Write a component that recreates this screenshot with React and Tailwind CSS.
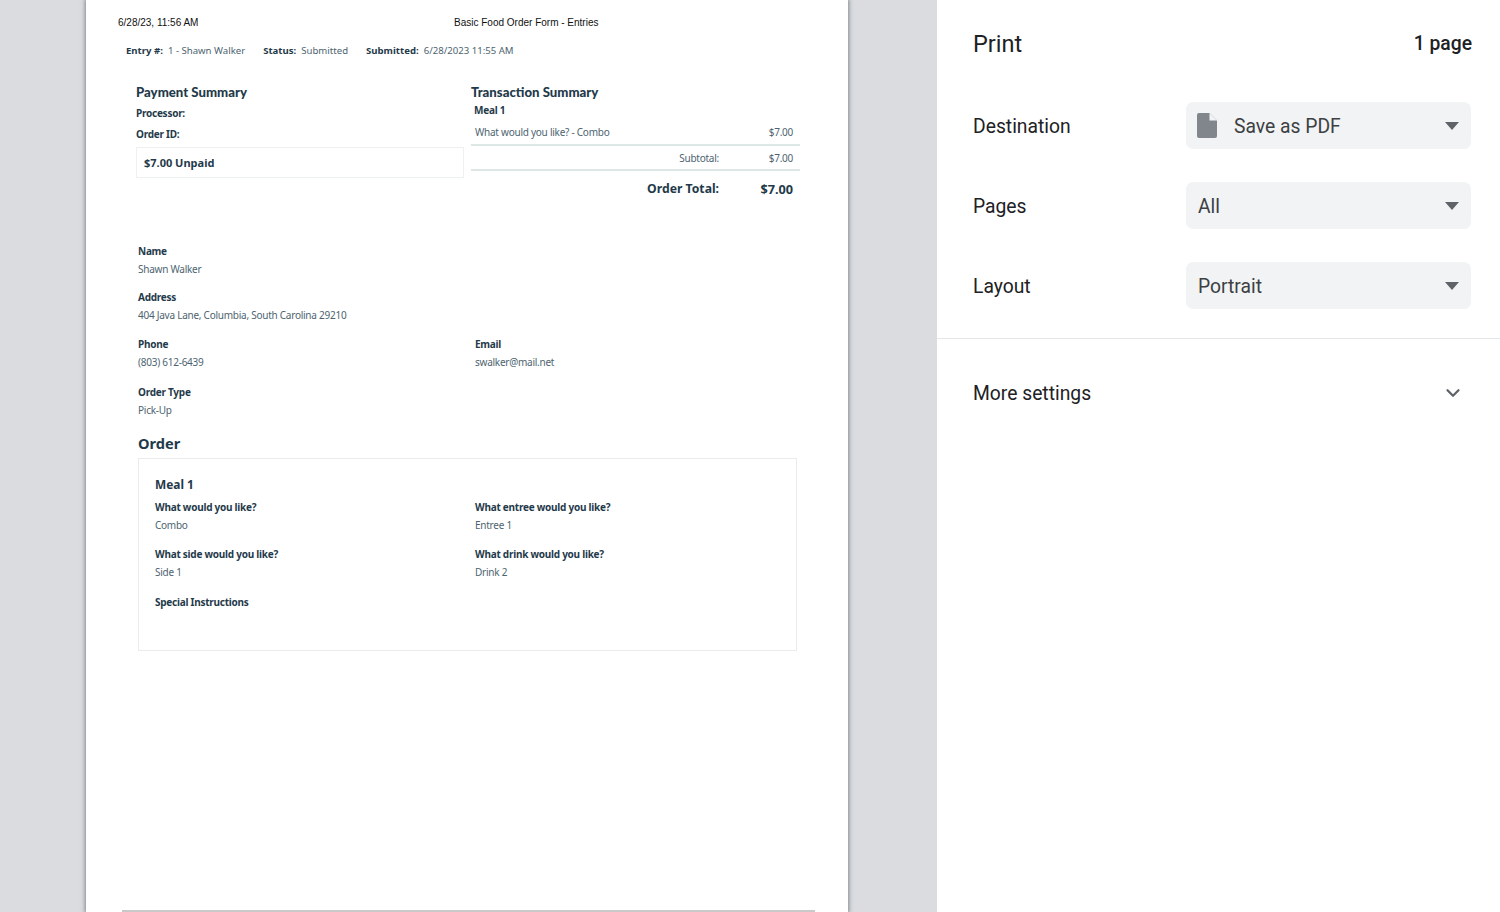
import { ChevronDown } from 'lucide-react';

const Field = ({ label, value, className = 'h-[47.5px]' }) => (
  <div className={className}>
    <div className="h-[18px] leading-[18px] text-[10px] tracking-[-0.25px] font-bold text-[#1f3a4a] font-['Noto_Sans',sans-serif]">{label}</div>
    <div className="h-[18px] leading-[18px] text-[10px] tracking-[-0.25px] text-[#4d6470] font-['Noto_Sans',sans-serif]">{value}</div>
  </div>
);

const Arrow = () => (
  <svg width="14" height="8" viewBox="0 0 14 8" className="shrink-0">
    <path d="M0 0h14L7 8z" fill="#5f6368" />
  </svg>
);

const SelectRow = ({ label, value, icon }) => (
  <div className="flex items-center h-[47px] mb-[33px]">
    <div className="w-[213px] text-[19.3px] leading-[30px] pt-[2px] text-[#202124]">{label}</div>
    <div className={`w-[285px] h-[47px] rounded-[7px] bg-[#f1f3f4] flex items-center pr-[12px] ${icon ? 'pl-[11px]' : 'pl-3'}`}>
      {icon && (
        <svg width="20" height="25" viewBox="0 0 20 25" className="mr-[17px] shrink-0">
          <path d="M2 0h10.5L20 7.5V23a2 2 0 0 1-2 2H2a2 2 0 0 1-2-2V2a2 2 0 0 1 2-2z" fill="#80868b" />
          <path d="M12.5 0v7.5H20z" fill="#f1f3f4" />
        </svg>
      )}
      <span className="flex-1 text-[19.3px] leading-[30px] pt-[2px] text-[#3c4043]">{value}</span>
      <Arrow />
    </div>
  </div>
);

export default function App() {
  return (
    <div className="flex h-[912px] w-[1500px] overflow-hidden bg-[#dadce0] font-['Roboto',sans-serif]">
      <div className="w-[937px] shrink-0 pl-[86px]">
        <div className="w-[762px] h-[912px] bg-white shadow-[0_0_4px_1px_rgba(60,64,67,0.55)] flex flex-col">
          <div className="flex pl-8 pt-[17px] h-[12px] box-content leading-[12px] text-[10px] text-[#111] font-['Liberation_Sans',sans-serif]">
            <span className="w-[336px]">6/28/23, 11:56 AM</span>
            <span>Basic Food Order Form - Entries</span>
          </div>

          <div className="flex mt-[14px] pl-10 h-[16px] leading-[16px] text-[9.6px] text-[#4d6470] font-['Noto_Sans',sans-serif]">
            <span className="font-bold text-[#1f3a4a] mr-[5px]">Entry #:</span>
            <span className="mr-[18px]">1 - Shawn Walker</span>
            <span className="font-bold text-[#1f3a4a] mr-[5px]">Status:</span>
            <span className="mr-[18px]">Submitted</span>
            <span className="font-bold text-[#1f3a4a] mr-[5px]">Submitted:</span>
            <span>6/28/2023 11:55 AM</span>
          </div>

          <div className="flex mt-[24px] pl-[50px]">
            <div className="w-[328px] mr-[7px]">
              <div className="h-[18px] leading-[18px] text-[13.2px] font-black text-[#1f3a4a] font-['Lato',sans-serif]">Payment Summary</div>
              <div className="mt-[2px] h-[21px] leading-[21px] text-[10px] tracking-[-0.25px] font-bold text-[#1f3a4a] font-['Noto_Sans',sans-serif]">Processor:</div>
              <div className="h-[21px] leading-[21px] text-[10px] tracking-[-0.25px] font-bold text-[#1f3a4a] font-['Noto_Sans',sans-serif]">Order ID:</div>
              <div className="mt-[2px] h-[31px] border border-[#eef1f1] pl-[7px] pt-[1px] flex items-center text-[11px] font-bold text-[#1f3a4a] font-['Noto_Sans',sans-serif]">$7.00 Unpaid</div>
            </div>
            <div className="w-[329px]">
              <div className="h-[18px] leading-[18px] text-[13.2px] font-black text-[#1f3a4a] font-['Lato',sans-serif]">Transaction Summary</div>
              <div className="pl-[3px] h-[18px] leading-[18px] text-[10px] tracking-[-0.25px] font-bold text-[#1f3a4a] font-['Noto_Sans',sans-serif]">Meal 1</div>
              <div className="flex justify-between items-center h-[27px] pl-1 pr-[7px] pt-[2px] border-b-2 border-[#dde7e6] text-[10px] tracking-[-0.25px] text-[#4d6470] font-['Noto_Sans',sans-serif]">
                <span>What would you like? - Combo</span>
                <span>$7.00</span>
              </div>
              <div className="flex justify-end items-center h-[25px] pr-[7px] pt-[2px] border-b-2 border-[#dde7e6] text-[10px] tracking-[-0.25px] text-[#4d6470] font-['Noto_Sans',sans-serif]">
                <span>Subtotal:</span>
                <span className="w-[74px] text-right">$7.00</span>
              </div>
              <div className="flex justify-end items-center h-[35px] pr-[7px] pt-[2px] text-[12.2px] font-bold text-[#1f3a4a] font-['Noto_Sans',sans-serif]">
                <span>Order Total:</span>
                <span className="w-[74px] text-right text-[12.7px]">$7.00</span>
              </div>
            </div>
          </div>

          <div className="mt-[36px] pl-[52px]">
            <Field label="Name" value="Shawn Walker" className="h-[46px]" />
            <Field label="Address" value="404 Java Lane, Columbia, South Carolina 29210" className="h-[47px]" />
            <div className="flex">
              <Field label="Phone" value="(803) 612-6439" className="h-[48px] w-[337px]" />
              <Field label="Email" value="swalker@mail.net" className="h-[48px]" />
            </div>
            <Field label="Order Type" value="Pick-Up" className="h-[47.5px]" />
            <div className="h-[24px] leading-[24px] text-[14.6px] font-bold text-[#1f3a4a] font-['Noto_Sans',sans-serif]">Order</div>

            <div className="mt-[3px] w-[659px] h-[193px] border border-[#e8eceb] pl-4 pt-[15px]">
              <div className="h-[20px] leading-[20px] text-[11.9px] font-bold text-[#1f3a4a] font-['Noto_Sans',sans-serif]">Meal 1</div>
              <div className="mt-[4px] grid grid-cols-[320px_1fr]">
                <Field label="What would you like?" value="Combo" className="h-[47px]" />
                <Field label="What entree would you like?" value="Entree 1" className="h-[47px]" />
                <Field label="What side would you like?" value="Side 1" className="h-[48px]" />
                <Field label="What drink would you like?" value="Drink 2" className="h-[48px]" />
                <Field label="Special Instructions" value="" />
              </div>
            </div>
          </div>

          <div className="mt-auto ml-9 w-[693px] h-[2px] bg-[#c9c9c9]" />
        </div>
      </div>

      <div className="flex-1 bg-white">
        <div className="pl-9 pr-[28px]">
          <div className="flex justify-between items-center h-[30px] mt-[28px] mb-[44px]">
            <span className="text-[23.5px] leading-[30px] pt-[2px] text-[#202124]">Print</span>
            <span className="text-[19.3px] leading-[30px] pt-[2px] font-medium text-[#202124]">1 page</span>
          </div>
          <SelectRow label="Destination" value="Save as PDF" icon />
          <SelectRow label="Pages" value="All" />
          <SelectRow label="Layout" value="Portrait" />
        </div>
        <div className="-mt-[4px] border-t border-[#e4e6e8]" />
        <div className="flex items-center justify-between h-[108px] pl-9 pr-[36px] text-[19.3px] leading-[30px] text-[#202124]">
          <span className="pt-[1px]">More settings</span>
          <ChevronDown size={22} strokeWidth={2.5} className="text-[#5f6368]" />
        </div>
      </div>
    </div>
  );
}
